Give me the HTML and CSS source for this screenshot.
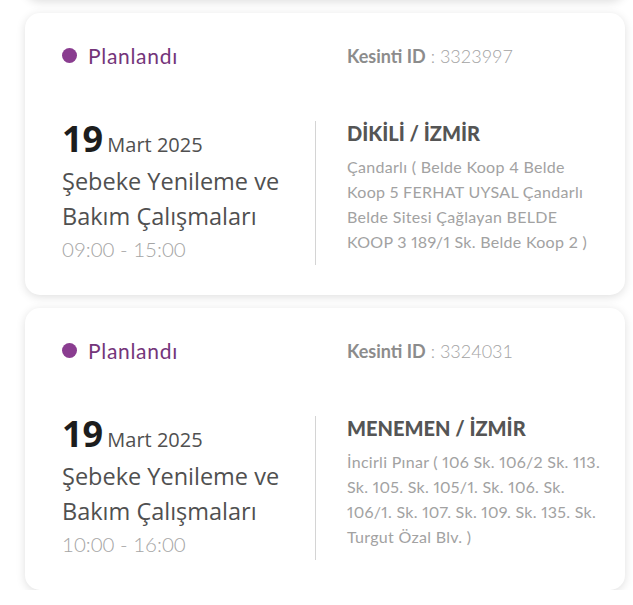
FILE: index.html
```html
<!DOCTYPE html>
<html lang="tr">
<head>
<meta charset="utf-8">
<link rel="stylesheet" href="styles.css">
</head>
<body>
<div class="list">
  <div class="card card-prev"></div>

  <div class="card">
    <div class="row head">
      <div class="status"><span class="dot"></span>Planlandı</div>
      <div class="kid"><b>Kesinti ID</b> : 3323997</div>
    </div>
    <div class="row body">
      <div class="left">
        <div class="date"><span class="day">19</span> <span class="month">Mart 2025</span></div>
        <div class="title">Şebeke Yenileme ve Bakım Çalışmaları</div>
        <div class="time">09:00 - 15:00</div>
      </div>
      <div class="right">
        <div class="place">DİKİLİ / İZMİR</div>
        <div class="addr">Çandarlı ( Belde Koop 4 Belde Koop 5 FERHAT UYSAL Çandarlı Belde Sitesi Çağlayan BELDE KOOP 3 189/1 Sk. Belde Koop 2 )</div>
      </div>
    </div>
  </div>

  <div class="card">
    <div class="row head">
      <div class="status"><span class="dot"></span>Planlandı</div>
      <div class="kid"><b>Kesinti ID</b> : 3324031</div>
    </div>
    <div class="row body">
      <div class="left">
        <div class="date"><span class="day">19</span> <span class="month">Mart 2025</span></div>
        <div class="title">Şebeke Yenileme ve Bakım Çalışmaları</div>
        <div class="time">10:00 - 16:00</div>
      </div>
      <div class="right">
        <div class="place">MENEMEN / İZMİR</div>
        <div class="addr">İncirli Pınar ( 106 Sk. 106/2 Sk. 113. Sk. 105. Sk. 105/1. Sk. 106. Sk. 106/1. Sk. 107. Sk. 109. Sk. 135. Sk. Turgut Özal Blv. )</div>
      </div>
    </div>
  </div>
</div>
</body>
</html>
```

FILE: styles.css
```css
html, body {
  margin: 0;
  padding: 0;
  background: #ffffff;
}
body {
  font-family: "Lato", "Liberation Sans", sans-serif;
  overflow: hidden;
}
.list {
  display: flex;
  flex-direction: column;
  gap: 13px;
  padding: 0 8px 0 25px;
}
.card {
  background: #fff;
  border-radius: 15px;
  box-shadow: 0 2px 10px rgba(0, 0, 0, 0.13);
  height: 282px;
  box-sizing: border-box;
  padding: 30px 0 30px 37px;
  display: flex;
  flex-direction: column;
}
.card-prev {
  margin-top: -282px;
}
.row {
  display: grid;
  grid-template-columns: 254px 1fr;
}
.head {
  height: 26px;
  align-items: center;
}
.status {
  display: flex;
  align-items: center;
  gap: 11px;
  color: #74357a;
  font-size: 21px;
  letter-spacing: 0.7px;
}
.dot {
  width: 15px;
  height: 15px;
  border-radius: 50%;
  background: #8a3d90;
}
.kid {
  padding-left: 31px;
  color: #a3a3a3;
  font-size: 18px;
  font-weight: 300;
}
.kid b {
  color: #8c8c8c;
  font-weight: 700;
}
.body {
  margin-top: 58px;
  height: 140px;
}
.left {
  border-right: 1px solid #d4d4d4;
  font-family: "Open Sans", "Noto Sans", sans-serif;
  margin-top: -6px;
}
.date {
  line-height: 36px;
}
.day {
  font-size: 36px;
  font-weight: 700;
  color: #1d1d1d;
}
.month {
  font-size: 20px;
  color: #505050;
}
.title {
  font-size: 23.5px;
  line-height: 35px;
  color: #505050;
  width: 240px;
}
.time {
  font-family: "Lato", sans-serif;
  font-weight: 300;
  font-size: 20.5px;
  line-height: 30px;
  color: #a5a5a5;
}
.right {
  padding-left: 31px;
  padding-right: 10px;
}
.place {
  font-size: 20px;
  font-weight: 900;
  color: #555;
  line-height: 26px;
  margin-top: -7px;
}
.addr {
  font-size: 16px;
  line-height: 25px;
  color: #a2a2a2;
  margin-top: 8px;
  max-width: 254px;
  letter-spacing: 0.3px;
  font-variant-numeric: proportional-nums;
}
```
